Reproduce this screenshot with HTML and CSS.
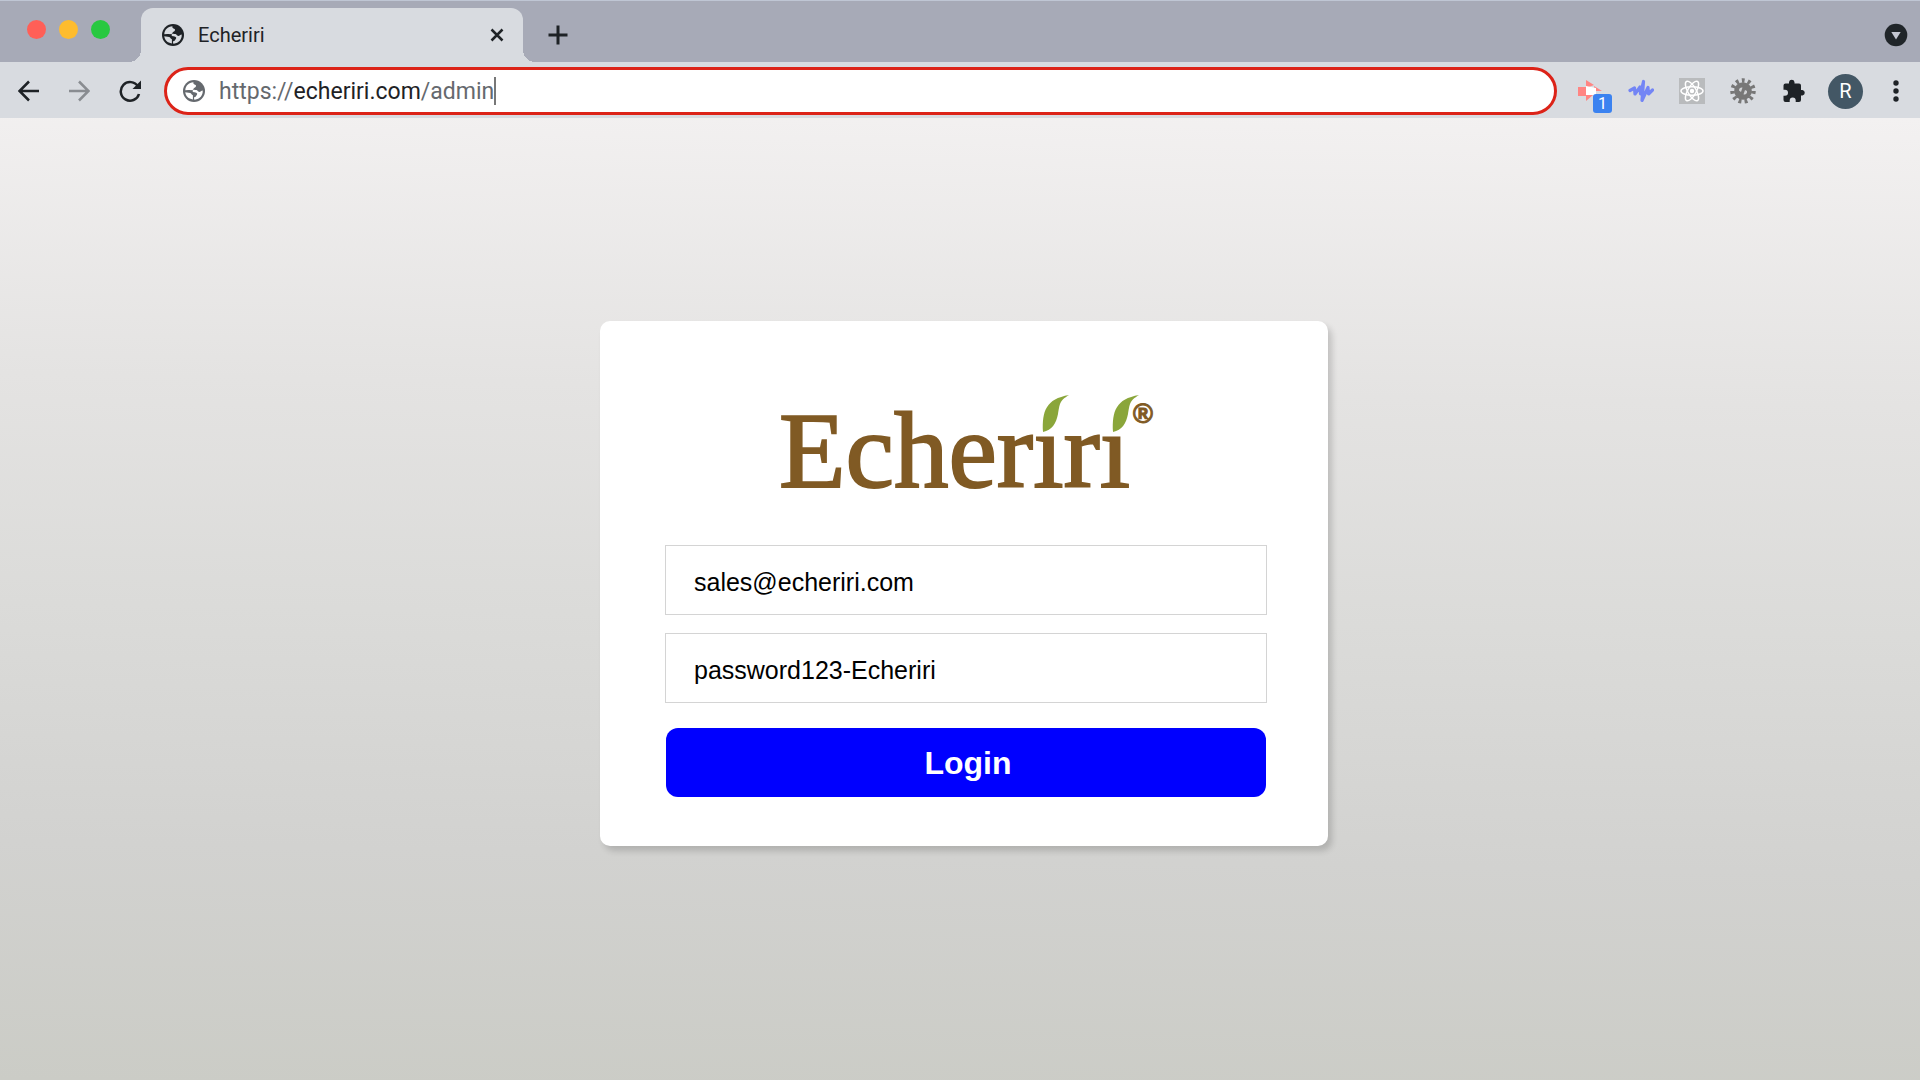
FILE: index.html
```html
<!DOCTYPE html>
<html lang="en">
<head>
<meta charset="utf-8">
<title>Echeriri</title>
<link rel="stylesheet" href="styles.css">
</head>
<body>
<header class="browser">
  <div class="tabstrip">
    <div class="lights"><span class="light red"></span><span class="light yellow"></span><span class="light green"></span></div>
    <div class="tab">
      <svg class="globe" viewBox="0 0 22 22" aria-hidden="true"><circle cx="11" cy="11" r="11" fill="currentColor"/><path d="M10.500 2.300c-.5 1.200.2 2 1.500 2.400 2 .6.8 2.600-.5 3.100-1.500.6-.4 2-2.200 2.300-1.600.3-2.600-.2-4.200-.1l-2.800.2C2.500 6 5.700 2.500 10.500 2.300zM19.700 10.500c.5 4.500-2.900 8.800-7.900 9.200-.9.100-.8-1.700-.7-2.500 1.900-.1 1.700-1.500 2.700-2.300 1-.9.200-1.900-1-2.300-1.700-.5-3.800-.8-3.200-2.200.6-1.100 2.700-.5 3.700-.3 1.400.2 1.300 1.800 3 1.800 1.400 0 1.900-1.400 3.400-1.400zM2.300 12.300l4.900.6c1.500.3 1.200 2 2.700 2.300v4.200C5.500 19 2.500 16 2.300 12.300z" class="cut"/></svg>
      <span class="tab-title">Echeriri</span>
      <button class="icon-button" aria-label="Close tab"><svg width="14" height="14" viewBox="0 0 14 14"><path d="M1.500 1.500l11 11M12.500 1.500l-11 11" class="line"/></svg></button>
    </div>
    <button class="icon-button new-tab" aria-label="New tab"><svg width="20" height="20" viewBox="0 0 20 20"><path d="M10 .5v19M.5 10h19" class="line thick"/></svg></button>
    <button class="icon-button tab-search" aria-label="Search tabs"><svg width="24" height="24" viewBox="0 0 24 24"><circle cx="12" cy="12" r="11.300" fill="#202529"/><path d="M7.300 9h9.400L12 16.500z" fill="#c3c6d0"/></svg></button>
  </div>
  <div class="toolbar">
    <nav class="nav">
      <button class="icon-button" aria-label="Back"><svg width="22" height="22" viewBox="0 0 22 22"><path d="M11 1.500L1.500 11l9.500 9.500M1.500 11H21" class="line"/></svg></button>
      <button class="icon-button dim" aria-label="Forward"><svg width="22" height="22" viewBox="0 0 22 22"><path d="M11 1.500l9.500 9.500-9.500 9.500M20.500 11H1" class="line"/></svg></button>
      <button class="icon-button" aria-label="Reload"><svg width="24" height="24" viewBox="0 0 24 24"><path d="M20 7.500A9.300 9.300 0 1 0 21 15" class="line"/><path d="M23 1.500V10h-8.500z" fill="#1e2226"/></svg></button>
    </nav>
    <div class="address" role="textbox" aria-label="Address">
      <svg class="globe" viewBox="0 0 22 22" aria-hidden="true"><circle cx="11" cy="11" r="11" fill="currentColor"/><path d="M10.500 2.300c-.5 1.200.2 2 1.500 2.400 2 .6.8 2.600-.5 3.100-1.500.6-.4 2-2.200 2.300-1.600.3-2.600-.2-4.200-.1l-2.800.2C2.500 6 5.700 2.500 10.500 2.300zM19.700 10.500c.5 4.500-2.900 8.800-7.900 9.200-.9.100-.8-1.700-.7-2.500 1.900-.1 1.700-1.500 2.700-2.300 1-.9.200-1.900-1-2.300-1.700-.5-3.800-.8-3.200-2.200.6-1.100 2.700-.5 3.700-.3 1.400.2 1.300 1.800 3 1.800 1.400 0 1.900-1.400 3.400-1.400zM2.300 12.300l4.900.6c1.500.3 1.200 2 2.700 2.300v4.200C5.500 19 2.500 16 2.300 12.300z" class="cut"/></svg>
      <span class="url">https://<span class="host">echeriri.com</span>/admin</span><span class="caret"></span>
    </div>
    <div class="toolbar-end">
      <div class="extensions">
        <button class="icon-button" aria-label="Screen recorder"><svg width="26" height="26" viewBox="0 0 26 26"><path d="M1 9h8v9H1zM9 2l8 5-8 3zM9 17h7l-7 6zM17 8l8 5h-8z" fill="#ff8583"/><path d="M9 8l10 2v7H9z" fill="#fff"/></svg><span class="badge">1</span></button>
        <button class="icon-button" aria-label="Voice"><svg width="26" height="26" viewBox="0 0 26 26"><path d="M2 12.500l4.500-2.500.5 6 5-7 .5 7L15.500 3.500l-1.500 19L20 9.500l.5 6.500 4-4" fill="none" stroke="#7385f5" stroke-width="3.200" stroke-linejoin="round" stroke-linecap="round"/></svg></button>
        <button class="icon-button" aria-label="React tools"><svg width="26" height="26" viewBox="0 0 26 26"><path d="M0 0h26v26H0z" fill="#b9bbbd"/><g fill="none" stroke="#fff" stroke-width="1.500"><ellipse cx="13" cy="13" rx="11" ry="4.200"/><ellipse cx="13" cy="13" rx="11" ry="4.200" transform="rotate(60 13 13)"/><ellipse cx="13" cy="13" rx="11" ry="4.200" transform="rotate(120 13 13)"/></g><circle cx="13" cy="13" r="2.200" fill="#fff"/></svg></button>
        <button class="icon-button" aria-label="Settings extension"><svg width="26" height="26" viewBox="0 0 26 26"><circle cx="13" cy="13" r="10.500" fill="none" stroke="#777" stroke-width="4.500" stroke-dasharray="2.800 3.200"/><circle cx="13" cy="13" r="8.800" fill="#777"/><path d="M9 12.500c-.2-2.300 1.800-3.500 3.500-3L11 14zM17 13c.5 2.500-1.500 4-3.500 3.300L15 12z" fill="#d0d2d5"/></svg></button>
        <button class="icon-button" aria-label="Extensions"><svg width="26" height="26" viewBox="0 0 26 26"><path d="M20.500 12H19V7.500A2 2 0 0 0 17 5.500h-4.500V4a2.800 2.800 0 0 0-5.500 0v1.500H3.500a2 2 0 0 0-2 2v4.300H3a3 3 0 0 1 0 6H1.500V22a2 2 0 0 0 2 2h4.200v-1.500a3 3 0 0 1 6 0V24H17a2 2 0 0 0 2-2v-4.500h1.500a2.800 2.800 0 0 0 0-5.500z" fill="#1e2226" transform="translate(1 0)"/></svg></button>
      </div>
      <button class="avatar" aria-label="Profile">R</button>
      <button class="icon-button" aria-label="Menu"><svg width="24" height="24" viewBox="0 0 24 24" fill="#1e2226"><circle cx="12" cy="4" r="2.700"/><circle cx="12" cy="12" r="2.700"/><circle cx="12" cy="20" r="2.700"/></svg></button>
    </div>
  </div>
</header>
<main class="page">
  <form class="card">
    <svg class="logo" viewBox="0 0 380 104" role="img" aria-label="Echeriri">
      <text x="0" y="96" class="wordmark">Echerırı</text>
      <path d="M264 41c-1-21 3-33 26-37-10 6-9 9-11 19-2 10-6 16-15 18z" class="leaf"/>
      <path d="M334 41c-1-21 3-33 26-37-10 6-9 9-11 19-2 10-6 16-15 18z" class="leaf"/>
      <text x="354" y="32" class="registered">®</text>
    </svg>
    <input class="field" type="text" aria-label="Email" value="sales@echeriri.com">
    <input class="field" type="text" aria-label="Password" value="password123-Echeriri">
    <button class="login" type="button">Login</button>
  </form>
</main>
</body>
</html>
```
FILE: styles.css
```css
* { box-sizing: border-box; }
body {
  margin: 0;
  min-height: 100vh;
  display: flex;
  flex-direction: column;
  font-family: "Liberation Sans", Arial, sans-serif;
}
button { border: 0; padding: 0; background: none; font: inherit; color: inherit; }
svg { display: block; }

.browser { background: #d8dbe0; color: #1e2226; }
.tabstrip {
  display: flex;
  height: 62px;
  padding: 0 12px 0 27px;
  background: #a7aab7;
  border-top: 1px solid #bfc6d4;
}
.lights { display: flex; gap: 13px; padding-top: 19px; width: 114px; }
.light { width: 19px; height: 19px; border-radius: 50%; }
.red { background: #ff5f57; }
.yellow { background: #febc2e; }
.green { background: #28c840; }
.tab {
  position: relative;
  display: flex;
  align-items: center;
  width: 382px;
  margin-top: 7px;
  padding: 0 19px 0 21px;
  background: #d8dbe0;
  border-radius: 12px 12px 0 0;
}
.tab::before, .tab::after {
  content: "";
  position: absolute;
  bottom: 0;
  width: 12px;
  height: 12px;
}
.tab::before { right: 100%; background: radial-gradient(circle at 0 0, #a7aab7 12px, #d8dbe0 12px); }
.tab::after { left: 100%; background: radial-gradient(circle at 100% 0, #a7aab7 12px, #d8dbe0 12px); }
.globe { width: 22px; height: 22px; flex: none; }
.cut { fill: #d8dbe0; }
.tab-title { flex: 1; padding-left: 14px; font: 20px Roboto, sans-serif; }
.icon-button { position: relative; display: flex; align-items: center; justify-content: center; }
.line { fill: none; stroke: #1e2226; stroke-width: 2.5; }
.thick { stroke-width: 3; }
.dim { opacity: .42; }
.new-tab { margin: 7px 0 0 25px; }
.tab-search { margin: 7px 0 0 auto; }

.toolbar { display: flex; align-items: center; height: 56px; padding: 2px 12px 0 18px; }
.nav { display: flex; gap: 28px; width: 146px; }
.address {
  display: flex;
  align-items: center;
  flex: 1;
  height: 48px;
  padding-left: 16px;
  border: 3px solid #dc2318;
  border-radius: 24px;
  background: #fff;
  color: #65696e;
}
.address .cut { fill: #fff; }
.url { padding-left: 14px; font: 23px Roboto, sans-serif; }
.host { color: #1e2226; }
.caret { width: 2px; height: 28px; background: #777; }
.toolbar-end { display: flex; align-items: center; gap: 21px; padding-left: 20px; }
.extensions { display: flex; gap: 25px; }
.badge {
  position: absolute;
  left: 16px;
  top: 16px;
  width: 19px;
  height: 19px;
  border-radius: 3px;
  background: #3b82f0;
  color: #fff;
  font: 16px/19px Roboto, sans-serif;
}
.avatar { width: 35px; height: 35px; border-radius: 50%; background: #435765; color: #fff; font: 20px Roboto, sans-serif; }

.page {
  flex: 1;
  display: grid;
  place-items: center;
  padding: 0 0 32px 8px;
  background: linear-gradient(181deg, #f3f1f1, #e4e3e2 29%, #dbdbd9 52%, #d2d2d0 76%, #cbccc6);
}
.card {
  display: flex;
  flex-direction: column;
  width: 728px;
  padding: 70px 61px 49px 65px;
  border-radius: 10px;
  background: #fff;
  box-shadow: 4px 5px 6px rgba(0, 0, 0, .16);
}
.logo { width: 380px; height: 104px; margin-left: 114px; margin-bottom: 50px; overflow: visible; }
.wordmark { font: 109px "Liberation Serif", serif; fill: #805a24; stroke: #805a24; stroke-width: 2; }
.leaf { fill: #8aa63a; }
.registered { font: bold 27px "Liberation Sans", sans-serif; fill: #805a24; stroke: #805a24; stroke-width: 1; }
.field {
  height: 70px;
  margin: 0 0 18px;
  padding: 6px 28px 0;
  border: 1px solid #d4d4d4;
  background: #fff;
  color: #000;
  font: 25px "Liberation Sans", Arial, sans-serif;
}
.login {
  height: 69px;
  margin: 7px 1px 0;
  padding: 2px 0 0 4px;
  border-radius: 12px;
  background: #00f;
  color: #fff;
  font: bold 32px "Liberation Sans", Arial, sans-serif;
}
```
